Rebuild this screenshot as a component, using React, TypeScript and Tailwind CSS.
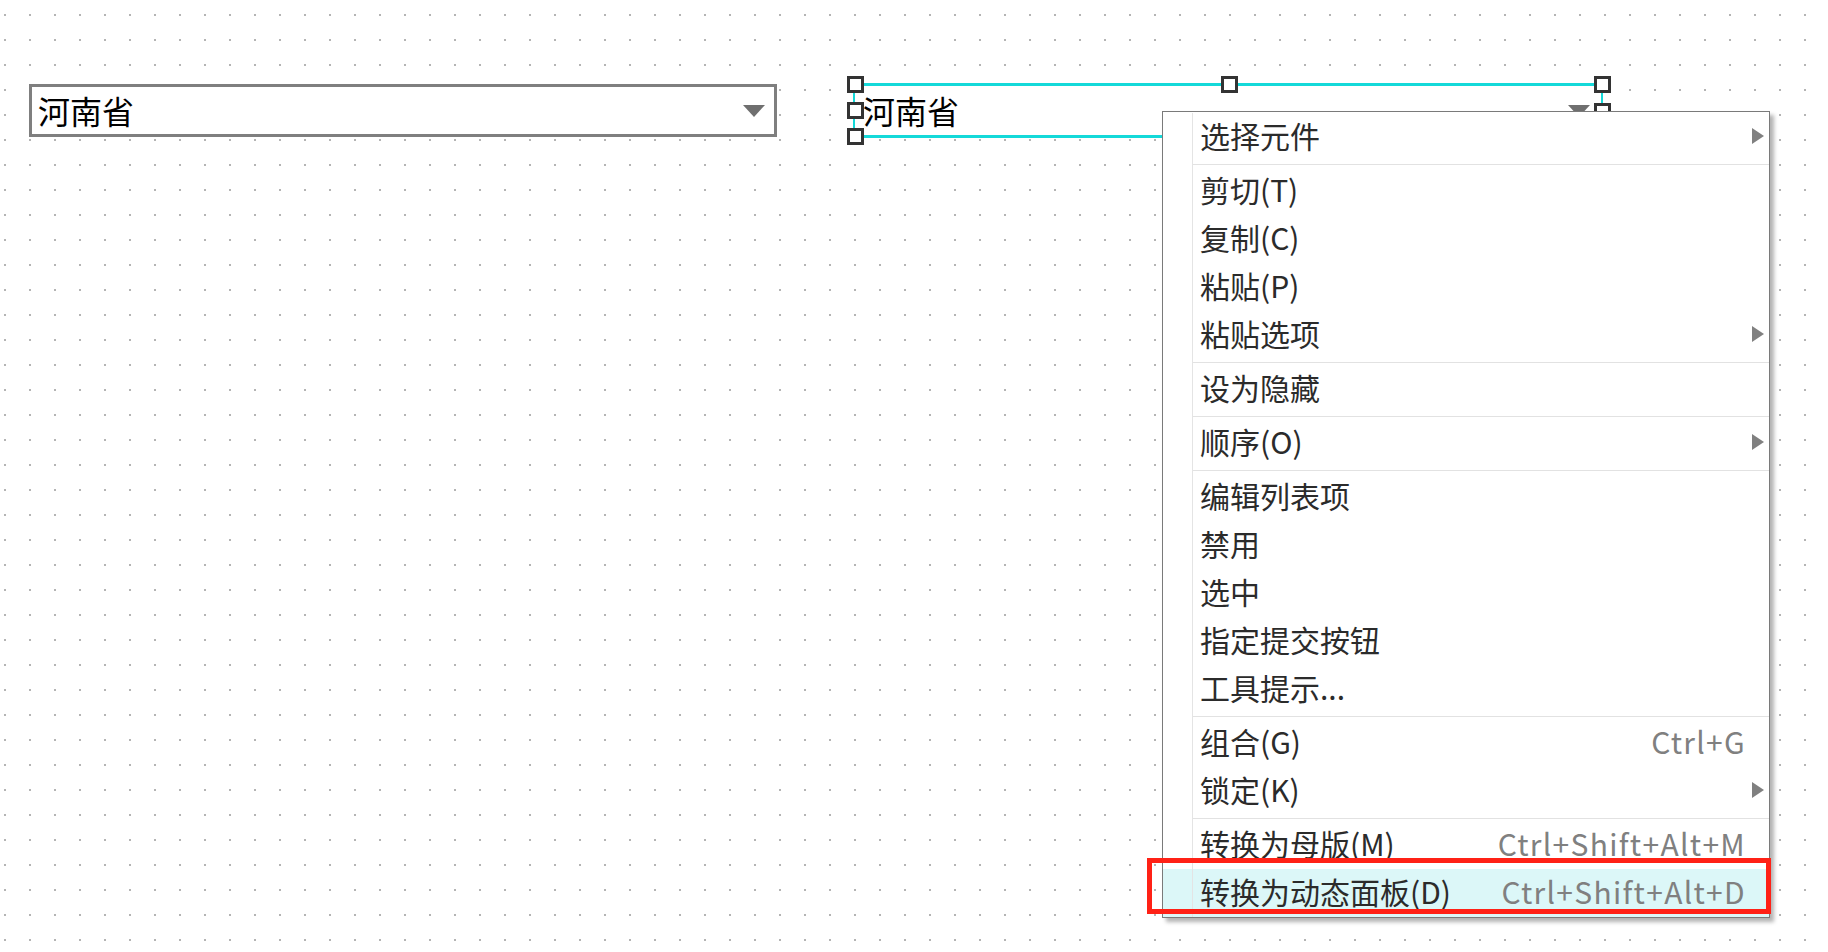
import React from 'react';

interface MenuItem {
    label: string;
    shortcut?: string;
    sub?: boolean;
    sep?: boolean;
    active?: boolean;
}

const menuItems: MenuItem[] = [
    { label: '选择元件', sub: true, sep: true },
    { label: '剪切(T)' },
    { label: '复制(C)' },
    { label: '粘贴(P)' },
    { label: '粘贴选项', sub: true, sep: true },
    { label: '设为隐藏', sep: true },
    { label: '顺序(O)', sub: true, sep: true },
    { label: '编辑列表项' },
    { label: '禁用' },
    { label: '选中' },
    { label: '指定提交按钮' },
    { label: '工具提示...', sep: true },
    { label: '组合(G)', shortcut: 'Ctrl+G' },
    { label: '锁定(K)', sub: true, sep: true },
    { label: '转换为母版(M)', shortcut: 'Ctrl+Shift+Alt+M' },
    { label: '转换为动态面板(D)', shortcut: 'Ctrl+Shift+Alt+D', active: true },
];

// selection handles around the second dropdown
const handles = [
    'left-[847px] top-[76px]',
    'left-[847px] top-[102px]',
    'left-[847px] top-[128px]',
    'left-[1221px] top-[76px]',
    'left-[1221px] top-[128px]',
    'left-[1594px] top-[76px]',
    'left-[1594px] top-[103px]',
    'left-[1594px] top-[128px]',
];

function DropArrow() {
    return (
        <svg width="22" height="12" viewBox="0 0 22 12" className="shrink-0">
            <polygon points="0,0 22,0 11,12" fill="#6f6f6f" />
        </svg>
    );
}

function SubArrow() {
    return (
        <svg width="12" height="16" viewBox="0 0 12 16" className="shrink-0">
            <polygon points="0,0 12,8 0,16" fill="#808080" />
        </svg>
    );
}

export default function App() {
    return (
        <div className="relative w-[1828px] h-[952px] overflow-hidden bg-white bg-[radial-gradient(circle_at_5px_15px,#b4b4b4_1px,transparent_1.3px)] bg-[length:25px_25px] font-['Noto_Sans_CJK_SC','Noto_Sans',sans-serif]">
            {/* plain dropdown */}
            <div className="absolute left-[29px] top-[84px] w-[748px] h-[53px] border-[3px] border-[#7f7f7f] bg-white flex items-center pl-[6px] pr-[9px]">
                <span className="text-[32px] leading-none text-black -translate-y-[1px]">河南省</span>
                <div className="ml-auto"><DropArrow /></div>
            </div>

            {/* selected dropdown */}
            <div className="absolute left-[853px] top-[83px] w-[750px] h-[55px] border-y-[3px] border-x-2 border-[#14d9d9] bg-white flex items-center pl-[8px] pr-[11px]">
                <span className="text-[32px] leading-none text-black -translate-y-[1px]">河南省</span>
                <div className="ml-auto"><DropArrow /></div>
            </div>
            {handles.map((pos) => (
                <div key={pos} className={`absolute ${pos} w-[17px] h-[17px] border-[3px] border-[#333333] bg-white`} />
            ))}

            {/* context menu */}
            <div className="absolute left-[1162px] top-[111px] w-[608px] border border-[#7a7a7a] bg-white pt-[1px] shadow-[4px_4px_4px_rgba(0,0,0,0.3)]">
                {menuItems.map((item) => (
                    <div key={item.label}>
                        <div className={`flex h-[48px] ${item.active ? 'bg-[#dcf7f8]' : ''}`}>
                            <div className="w-[30px] shrink-0 border-r border-[#e4e4e4]" />
                            <div className="flex-1 flex items-center pl-[7px] pr-[5px]">
                                <span className="text-[30px] leading-none text-[#2b2b2b] -translate-y-[2px]">{item.label}</span>
                                {item.shortcut && (
                                    <span className="ml-auto mr-[18px] text-[30px] leading-none tracking-[1.3px] text-[#808080] -translate-y-[2px]">{item.shortcut}</span>
                                )}
                                {item.sub && (
                                    <div className="ml-auto -translate-y-[1px]"><SubArrow /></div>
                                )}
                            </div>
                        </div>
                        {item.sep && (
                            <div className="flex h-[6px]">
                                <div className="w-[30px] shrink-0 border-r border-[#e4e4e4]" />
                                <div className="flex-1 pt-[3px]">
                                    <div className="h-px bg-[#e2e2e2]" />
                                </div>
                            </div>
                        )}
                    </div>
                ))}
            </div>

            {/* highlight marker */}
            <div className="absolute left-[1147px] top-[858px] w-[624px] h-[56px] border-[5px] border-[#ff2116]" />
        </div>
    );
}
